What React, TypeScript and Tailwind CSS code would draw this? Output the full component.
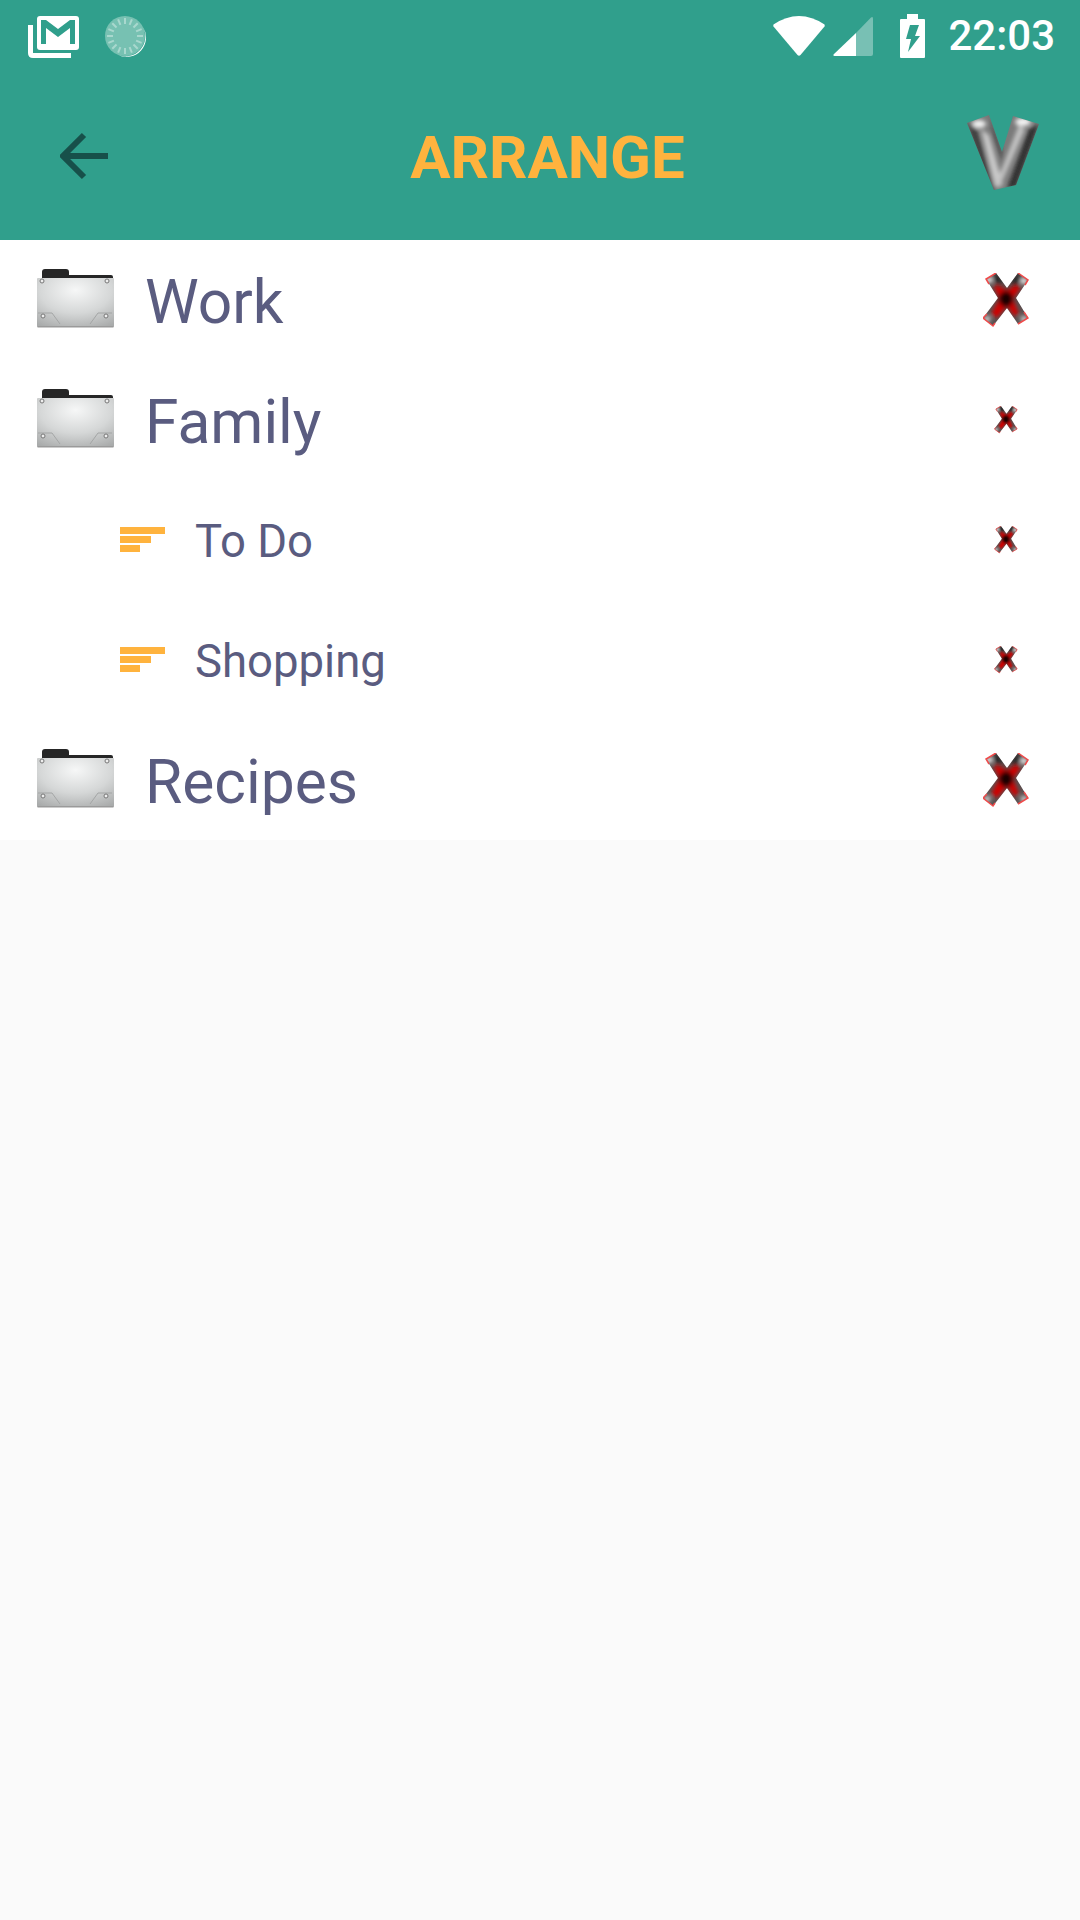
import { useId } from 'react';

const items = [
  { name: 'Work', sub: false },
  { name: 'Family', sub: false },
  { name: 'To Do', sub: true },
  { name: 'Shopping', sub: true },
  { name: 'Recipes', sub: false },
];

function GmailIcon() {
  return (
    <svg width="52" height="42" viewBox="0 0 52 42" className="ml-[28px] shrink-0">
      <path d="M2.500 9v28q0 2.500 2.500 2.500h38" fill="none" stroke="#fff" strokeWidth="5" />
      <rect x="9" y="0" width="42" height="34" rx="3" fill="#fff" />
      <path d="M13 4h5l12 9 12-9h5v24h-5V12l-12 9-12-9v16h-5z" fill="#309f8c" />
    </svg>
  );
}

function SpinnerIcon() {
  const ticks = Array.from({ length: 16 }, (_, i) => i * 22.5);
  return (
    <svg width="44" height="44" viewBox="0 0 44 44" className="ml-[24px] shrink-0">
      <circle cx="21" cy="21" r="20" fill="#77c1b2" />
      {ticks.map((a) => (
        <rect key={a} x="20" y="3" width="2" height="6" fill="#a9d8ce" transform={`rotate(${a} 21 21)`} />
      ))}
      <path d="M39 12a19.500 19.500 0 0 1-25 28a20 20 0 0 0 25-28z" fill="#fff" />
    </svg>
  );
}

function StatusIcons() {
  return (
    <div className="flex items-center">
      <svg width="52" height="42" viewBox="0 0 52 42" className="shrink-0">
        <path d="M0.500 9.500Q13 1 26 1t25.500 8.500q0.500 1 0 2L27.500 40q-1.500 1.500-3 0L0.500 11.500q-0.500-1 0-2z" fill="#fff" />
      </svg>
      <svg width="40" height="40" viewBox="0 0 40 40" className="ml-[8px] shrink-0">
        <path d="M23 17L38 1.500q2-1.500 2 1V38q0 2-2 2H23z" fill="#fff" fillOpacity="0.35" />
        <path d="M23 17V40H1.500q-1.500 0-1-1.500z" fill="#fff" />
      </svg>
      <svg width="25" height="44" viewBox="0 0 25 44" className="ml-[27px] shrink-0">
        <path d="M7 0h11v5h6q1 0 1 1v37q0 1-1 1H1q-1 0-1-1V6q0-1 1-1h6z" fill="#fff" />
        <path d="M10 11h9l-4 11h5L8 38l3-13H6z" fill="#309f8c" />
      </svg>
    </div>
  );
}

function ArrowBack() {
  return (
    <svg width="48" height="48" viewBox="0 0 48 48" className="shrink-0">
      <path d="M48 24H4M24 3L3 24l21 21" fill="none" stroke="#17504a" strokeWidth="6" />
    </svg>
  );
}

function VLogo() {
  const id = useId();
  return (
    <svg width="72" height="78" viewBox="0 0 72 78" className="mb-[3px] shrink-0">
      <defs>
        <clipPath id={`${id}c`}>
          <path d="M0 8L22 0L35 37L46 1L72 9L49 70L27 75z" />
        </clipPath>
        <filter id={`${id}f`} x="-50%" y="-50%" width="200%" height="200%">
          <feGaussianBlur stdDeviation="2" />
        </filter>
      </defs>
      <g clipPath={`url(#${id}c)`}>
        <rect width="72" height="78" fill="#7a7a7a" />
        <g filter={`url(#${id}f)`}>
          <path d="M0 8L8 8L28 76L22 76z" fill="#3c3c3c" />
          <path d="M22 0L35 37L36 48L26 20z" fill="#3f3f3f" />
          <path d="M14 14L22 20L36 70L28 72z" fill="#c9c9c9" />
          <path d="M62 14L72 9L49 72L40 74z" fill="#2e2e2e" />
          <path d="M52 10L58 14L32 74L30 66z" fill="#c2c2c2" />
          <ellipse cx="12" cy="9" rx="7" ry="4" fill="#f2f2f2" />
          <ellipse cx="56" cy="7" rx="8" ry="4" fill="#f5f5f5" />
        </g>
      </g>
    </svg>
  );
}

function Folder() {
  const id = useId();
  return (
    <svg width="78" height="60" viewBox="0 0 78 60" className="mb-[2px] shrink-0">
      <defs>
        <radialGradient id={id} cx="0.500" cy="0.250" r="0.850">
          <stop offset="0" stopColor="#f6f7f7" />
          <stop offset="0.550" stopColor="#d5d7d7" />
          <stop offset="1" stopColor="#a9abab" />
        </radialGradient>
      </defs>
      <path d="M6 9V3q0-3 3-3h21q3 0 3 3v3h42q2 0 2 2v4H2V9z" fill="#262626" />
      <rect x="1" y="9" width="77" height="49" rx="1" fill={`url(#${id})`} />
      <rect x="1.500" y="57" width="76" height="1.500" fill="#9a9a9a" />
      <path d="M2 44h14l8 11M76 44H62l-8 11" fill="none" stroke="#a4a6a6" strokeWidth="1" />
      {[[6, 12], [71, 12], [7, 47], [70, 47]].map(([cx, cy]) => (
        <circle key={cx} cx={cx} cy={cy} r="2" fill="#eee" stroke="#777" strokeWidth="1" />
      ))}
    </svg>
  );
}

function RemoveIcon({ big }: { big: boolean }) {
  const id = useId();
  return (
    <svg width={big ? 46 : 24} height={big ? 55 : 28} viewBox="0 0 46 55" className="shrink-0">
      <defs>
        <clipPath id={`${id}c`}>
          <path d="M3 6L13 0L24 15L35 0L45 7L33 25L45 45L35 51L24 35L10 53L0 45L15 25z" />
        </clipPath>
        <filter id={`${id}f`} x="-50%" y="-50%" width="200%" height="200%">
          <feGaussianBlur stdDeviation="2.200" />
        </filter>
      </defs>
      <g clipPath={`url(#${id}c)`}>
        <rect width="46" height="55" fill="#5a5050" />
        <g filter={`url(#${id}f)`}>
          <path d="M10 12L16 13L24 17L33 12L38 14L30 26L36 41L31 43L24 33L14 45L8 41L16 26z" fill="#cf0000" />
          <ellipse cx="23" cy="26" rx="7" ry="8" fill="#1c0000" />
          <path d="M13 0L20 9L16 12L9 4z" fill="#222" />
          <path d="M35 0L28 10L32 13L40 4z" fill="#222" />
          <ellipse cx="6" cy="7" rx="3.500" ry="3" fill="#f4f4f4" />
          <ellipse cx="41" cy="8" rx="3.500" ry="3" fill="#f4f4f4" />
          <ellipse cx="4" cy="46" rx="3.500" ry="3" fill="#d8d8d8" />
          <ellipse cx="41" cy="46" rx="3.500" ry="3" fill="#d8d8d8" />
        </g>
      </g>
      <path
        d="M6 11L3 6L13 0M35 0L45 7L42 12M41 39L45 45L35 51M12 50L10 53L0 45L4 41"
        fill="none"
        stroke="#f04a4a"
        strokeWidth="1.500"
      />
    </svg>
  );
}

function SortIcon() {
  return (
    <div className="mb-[1px] flex w-[45px] shrink-0 flex-col gap-[2px]">
      <div className="h-[7px] w-[45px] bg-[#ffb33e]" />
      <div className="h-[7px] w-[31px] bg-[#ffb33e]" />
      <div className="h-[7px] w-[20px] bg-[#ffb33e]" />
    </div>
  );
}

export default function App() {
  return (
    <main className="min-h-[1920px] bg-[#fafafa] font-['Roboto',sans-serif]">
      <header className="h-[240px] bg-[#309f8c]">
        <div className="flex h-[72px] items-center justify-between">
          <div className="flex items-center pt-[2px]">
            <GmailIcon />
            <SpinnerIcon />
          </div>
          <div className="flex items-center pr-[25px]">
            <StatusIcons />
            <span className="ml-[23px] text-[42px] font-medium leading-none text-white">22:03</span>
          </div>
        </div>
        <div className="flex h-[168px] items-center justify-between pb-[1px] pl-[60px] pr-[41px]">
          <ArrowBack />
          <h1 className="ml-[20px] pt-[4px] text-[60px] font-bold leading-none text-[#ffb33e]">ARRANGE</h1>
          <VLogo />
        </div>
      </header>
      <ul className="bg-white">
        {items.map((item) => (
          <li key={item.name} className="flex h-[120px] items-center justify-between pr-[51px]">
            {item.sub ? (
              <div className="flex items-center pl-[120px]">
                <SortIcon />
                <span className="ml-[30px] pt-[5px] text-[45.500px] text-[#5a5c80]">{item.name}</span>
              </div>
            ) : (
              <div className="flex items-center pl-[36px]">
                <Folder />
                <span className="ml-[31px] pt-[7px] text-[60.500px] text-[#5a5c80]">{item.name}</span>
              </div>
            )}
            <div className="flex w-[46px] justify-center">
              <RemoveIcon big={item.name === 'Work' || item.name === 'Recipes'} />
            </div>
          </li>
        ))}
      </ul>
    </main>
  );
}
